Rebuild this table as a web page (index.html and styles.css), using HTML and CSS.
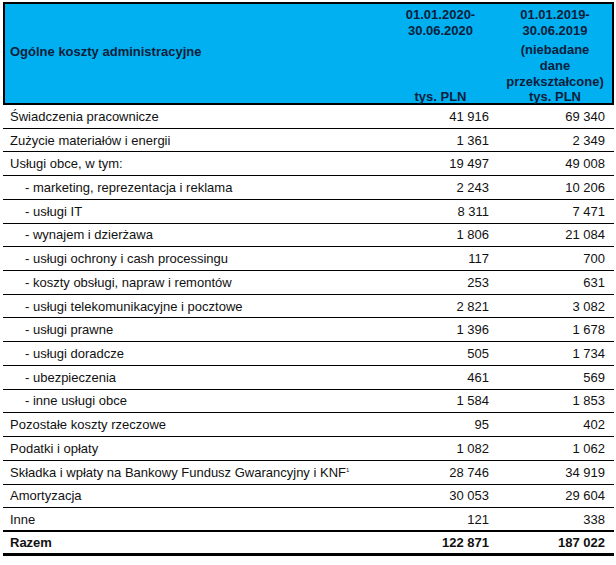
FILE: index.html
```html
<!DOCTYPE html>
<html lang="pl">
<head>
<meta charset="utf-8">
<title>Ogólne koszty administracyjne</title>
<link rel="stylesheet" href="styles.css">
</head>
<body>
<div class="sheet">
  <div class="head">
    <div class="hcell hlabel">Ogólne koszty administracyjne</div>
    <div class="hcell hnum">
      <div class="period">01.01.2020-<br>30.06.2020</div>
      <div class="unit">tys. PLN</div>
    </div>
    <div class="hcell hnum">
      <div class="period">01.01.2019-<br>30.06.2019</div>
      <div class="note">(niebadane<br>dane<br>przekształcone)</div>
      <div class="unit">tys. PLN</div>
    </div>
  </div>
  <div class="row"><div class="lbl">Świadczenia pracownicze</div><div class="num">41 916</div><div class="num">69 340</div></div>
  <div class="row"><div class="lbl">Zużycie materiałów i energii</div><div class="num">1 361</div><div class="num">2 349</div></div>
  <div class="row"><div class="lbl">Usługi obce, w tym:</div><div class="num">19 497</div><div class="num">49 008</div></div>
  <div class="row"><div class="lbl sub">- marketing, reprezentacja i reklama</div><div class="num">2 243</div><div class="num">10 206</div></div>
  <div class="row"><div class="lbl sub">- usługi IT</div><div class="num">8 311</div><div class="num">7 471</div></div>
  <div class="row"><div class="lbl sub">- wynajem i dzierżawa</div><div class="num">1 806</div><div class="num">21 084</div></div>
  <div class="row"><div class="lbl sub">- usługi ochrony i cash processingu</div><div class="num">117</div><div class="num">700</div></div>
  <div class="row"><div class="lbl sub">- koszty obsługi, napraw i remontów</div><div class="num">253</div><div class="num">631</div></div>
  <div class="row"><div class="lbl sub">- usługi telekomunikacyjne i pocztowe</div><div class="num">2 821</div><div class="num">3 082</div></div>
  <div class="row"><div class="lbl sub">- usługi prawne</div><div class="num">1 396</div><div class="num">1 678</div></div>
  <div class="row"><div class="lbl sub">- usługi doradcze</div><div class="num">505</div><div class="num">1 734</div></div>
  <div class="row"><div class="lbl sub">- ubezpieczenia</div><div class="num">461</div><div class="num">569</div></div>
  <div class="row"><div class="lbl sub">- inne usługi obce</div><div class="num">1 584</div><div class="num">1 853</div></div>
  <div class="row"><div class="lbl">Pozostałe koszty rzeczowe</div><div class="num">95</div><div class="num">402</div></div>
  <div class="row"><div class="lbl">Podatki i opłaty</div><div class="num">1 082</div><div class="num">1 062</div></div>
  <div class="row"><div class="lbl">Składka i wpłaty na Bankowy Fundusz Gwarancyjny i KNF<sup class="fn">1</sup></div><div class="num">28 746</div><div class="num">34 919</div></div>
  <div class="row"><div class="lbl">Amortyzacja</div><div class="num">30 053</div><div class="num">29 604</div></div>
  <div class="row pre-total"><div class="lbl">Inne</div><div class="num">121</div><div class="num">338</div></div>
  <div class="row total"><div class="lbl">Razem</div><div class="num">122 871</div><div class="num">187 022</div></div>
</div>
</body>
</html>
```

FILE: styles.css
```css
html, body {
  margin: 0;
  padding: 0;
  background: #ffffff;
}

body {
  font-family: "Liberation Sans", Arial, sans-serif;
  font-size: 13px;
  color: #111;
}

.sheet {
  width: 611px;
  margin: 2px 0 0 3px;
}

.head {
  display: grid;
  grid-template-columns: 378px 115px 114px;
  height: 103px;
  box-sizing: border-box;
  border: 2px solid #000;
  background: #00b0f0;
  color: #0c1e3c;
  font-weight: bold;
  line-height: 16px;
}

.hcell {
  display: flex;
  flex-direction: column;
}

.hlabel {
  justify-content: center;
  padding: 0 0 6px 5px;
}

.hnum {
  align-items: center;
  text-align: center;
  padding-top: 3px;
}

.note {
  margin-top: 3px;
}

.unit {
  margin-top: auto;
  padding-bottom: 3px;
  line-height: 13px;
}

.row {
  display: grid;
  grid-template-columns: 380px 115px 116px;
  height: 23.72px;
  box-sizing: border-box;
  border-bottom: 1px solid #000;
  align-items: center;
  line-height: 16px;
}

.lbl {
  padding-left: 7px;
  padding-top: 1px;
  white-space: nowrap;
}

.lbl.sub {
  padding-left: 22px;
}

.num {
  text-align: right;
  padding-right: 9px;
  padding-top: 1px;
}

.fn {
  font-size: 6px;
  line-height: 0;
  vertical-align: 5px;
}

.pre-total {
  border-bottom: 2px solid #000;
}

.total {
  font-weight: bold;
  border-bottom: 3px solid #000;
  height: 24px;
}
```
